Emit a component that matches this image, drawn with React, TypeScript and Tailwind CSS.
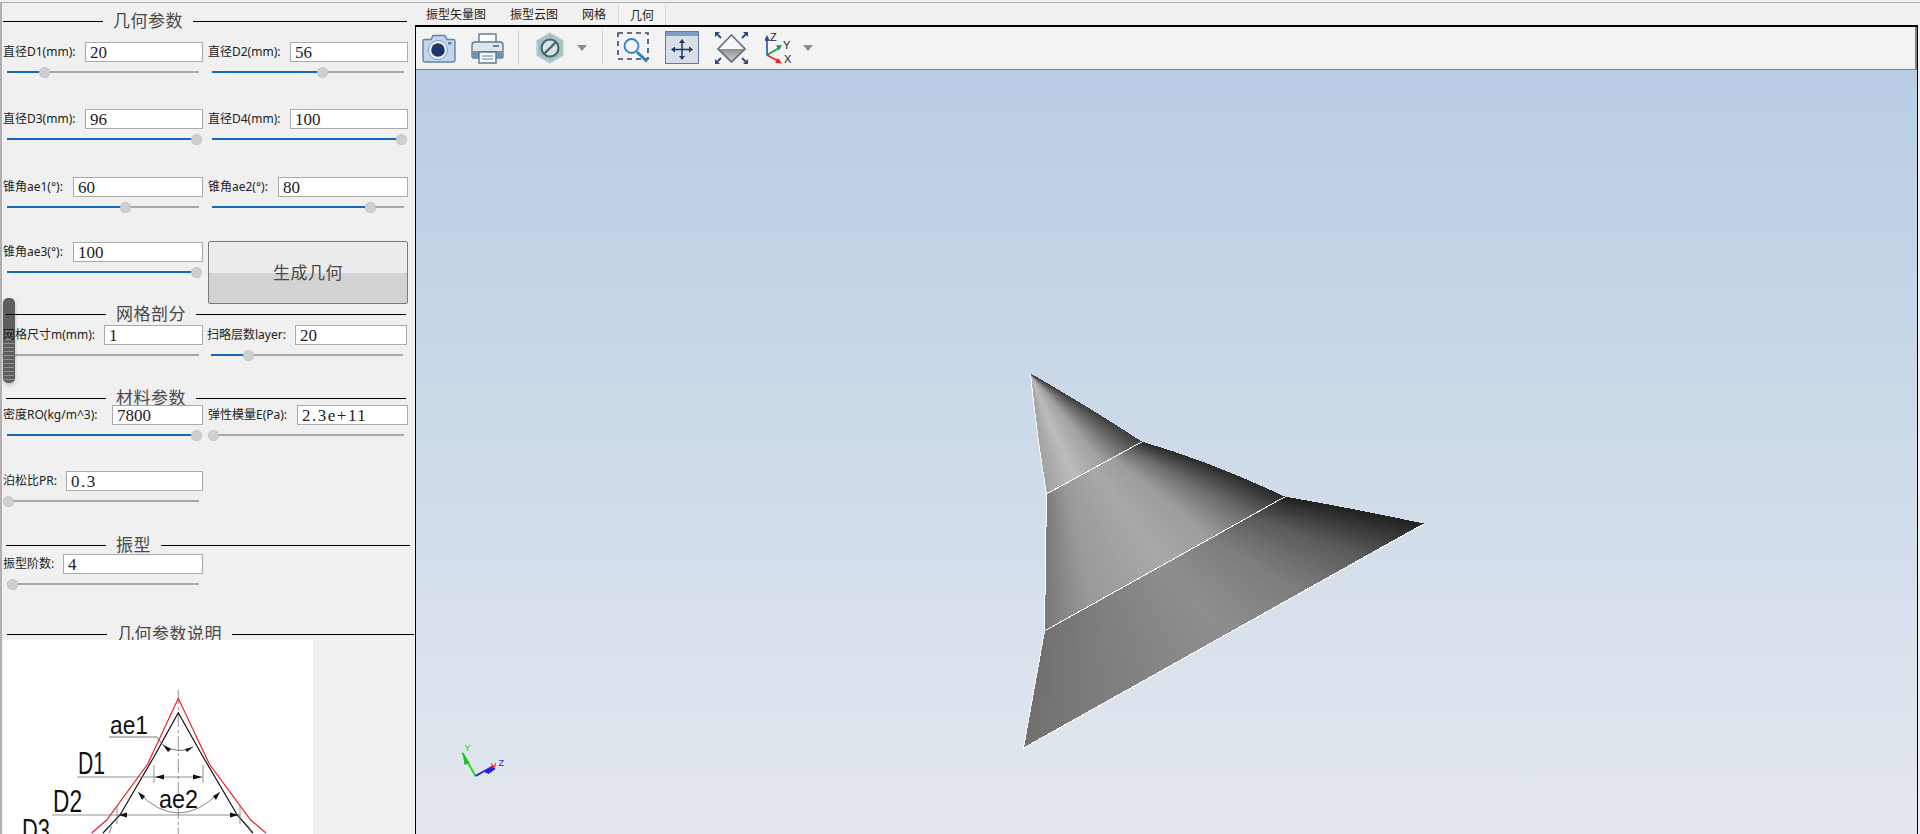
import type { ReactNode } from 'react'

type Pt = [number, number]
type Band = { a0: Pt; a1: Pt; b0: Pt; b1: Pt; c0: Pt; c1: Pt; stops: [number, number][] }

const A: Pt = [1030, 374]
const B: Pt = [1141, 442]
const C: Pt = [1284, 497]
const D: Pt = [1423, 524]
const E: Pt = [1023, 748]
const F: Pt = [1044, 631]
const G: Pt = [1046, 494]

// each band of the cone is drawn as thin slices, the shade only depends on t
const bands: Band[] = [
  {
    a0: A, a1: A, b0: G, b1: B, c0: [1036, 434], c1: [1086, 406],
    stops: [[0, 160], [0.3, 188], [0.6, 160], [0.8, 112], [1, 64]],
  },
  {
    a0: G, a1: B, b0: F, b1: C, c0: [1045, 562], c1: [1210, 462],
    stops: [[0, 120], [0.2, 154], [0.5, 168], [0.7, 156], [0.85, 108], [1, 44]],
  },
  {
    a0: F, a1: C, b0: E, b1: D, c0: [1034, 689], c1: [1353, 509],
    stops: [[0, 112], [0.25, 128], [0.5, 142], [0.7, 124], [0.85, 92], [1, 34]],
  },
]

const lerp = (p: Pt, q: Pt, t: number): string =>
  `${(p[0] + (q[0] - p[0]) * t).toFixed(2)} ${(p[1] + (q[1] - p[1]) * t).toFixed(2)}`

function shade(stops: [number, number][], t: number) {
  for (let i = 1; i < stops.length; i++) {
    if (t <= stops[i][0]) {
      const k = (t - stops[i - 1][0]) / (stops[i][0] - stops[i - 1][0])
      const g = Math.round(stops[i - 1][1] + (stops[i][1] - stops[i - 1][1]) * k)
      return `rgb(${g},${g},${g})`
    }
  }
  return 'rgb(34,34,34)'
}

const slices = bands.flatMap((band, n) =>
  Array.from({ length: 90 }, (_, i) => {
    const t0 = i / 90
    const t1 = (i + 1) / 90
    const { a0, a1, b0, b1, c0, c1 } = band
    return {
      key: `${n}-${i}`,
      fill: shade(band.stops, (t0 + t1) / 2),
      d: `M${lerp(a0, a1, t0)} Q${lerp(c0, c1, t0)} ${lerp(b0, b1, t0)} L${lerp(b0, b1, t1)} Q${lerp(c0, c1, t1)} ${lerp(a0, a1, t1)} Z`,
    }
  }),
)

function Slider({ offset }: { offset: number }) {
  return (
    <div className="relative ml-[4px] mt-[4px] flex h-[12px] w-[192px] items-center">
      <div className="h-[2px] w-full bg-[#a8a8a8]" />
      <div className="absolute left-0 top-[5px] h-[2px] bg-[#1569bd]" style={{ width: offset }} />
      <div
        className="absolute top-[1px] h-[11px] w-[11px] rounded-full border border-dotted border-[#bbbbbb] bg-[#cfcfcf]"
        style={{ left: offset - 5 }}
      />
    </div>
  )
}

function Field({
  label,
  labelClass,
  value,
  offset,
  valueClass = '',
  className = '',
}: {
  label: string
  labelClass: string
  value: string
  offset: number
  valueClass?: string
  className?: string
}) {
  return (
    <div className={className}>
      <div className="flex h-[20px] items-center">
        <span className={`${labelClass} relative z-20 shrink-0 whitespace-nowrap text-[12px] leading-[20px] text-[#222222]`}>{label}</span>
        <div className={`${valueClass} h-[20px] flex-1 border border-[#a9a9a9] bg-white pl-[4px] font-['Liberation_Serif','Noto_Sans_CJK_SC',serif] text-[17px] leading-[19px] text-[#222222]`}>
          {value}
        </div>
      </div>
      <Slider offset={offset} />
    </div>
  )
}

function SectionTitle({ title, className }: { title: string; className: string }) {
  return (
    <div className={`${className} relative z-20 flex h-[20px] items-center`}>
      <div className="h-px w-[100px] bg-black" />
      <span className="mx-[10px] whitespace-nowrap text-[17px] leading-[20px] tracking-[0.5px] text-[#4a4a4a]">{title}</span>
      <div className="h-px flex-1 bg-black" />
    </div>
  )
}

function Diagram() {
  return (
    <svg className="block h-[194px] w-[310px]" viewBox="3 640 310 194">
      <rect x="3" y="640" width="310" height="194" fill="#ffffff" />
      <path d="M178.3 690V834" stroke="#777777" strokeWidth="0.8" strokeDasharray="14 3 3 3" fill="none" />
      <path d="M91.7 833L106.7 820L147.7 764L178.3 698.3L209.3 764L250.7 820L266 833" stroke="#ee1c25" strokeWidth="1.2" fill="none" />
      <path d="M103 833L120 815L154 756.7L178.3 712.7L203 756.7L237.3 815L253 833" stroke="#111111" strokeWidth="1.2" fill="none" />
      <path d="M109 737H157L163 745Q178 755 193 747" stroke="#555555" strokeWidth="0.8" fill="none" />
      <path d="M77 777H203M154 765V783M203 765V783" stroke="#777777" strokeWidth="0.8" fill="none" />
      <path d="M52 815H240M117 806V824M240 806V824" stroke="#777777" strokeWidth="0.8" fill="none" />
      <path d="M138 792Q178 834 220 792" stroke="#666666" strokeWidth="0.8" fill="none" />
      <path d="M155 777L164 774.5V779.5ZM202 777L193 774.5V779.5ZM118 815L127 812.5V817.5ZM239 815L230 812.5V817.5ZM163 745L171 749L168 752ZM193 747L185 749L187 752ZM138 792L145 796L142 800ZM220 792L213 796L216 800Z" fill="#111111" />
      <path d="M109 833L112 826M248 826L252 833" stroke="#555555" strokeWidth="0.8" fill="none" />
      <g fontFamily="'Liberation Sans', sans-serif" fill="#111111">
        <text x="110" y="734" fontSize="26" textLength="38" lengthAdjust="spacingAndGlyphs">ae1</text>
        <text x="78" y="774" fontSize="31" textLength="27" lengthAdjust="spacingAndGlyphs">D1</text>
        <text x="159" y="808" fontSize="26" textLength="39" lengthAdjust="spacingAndGlyphs">ae2</text>
        <text x="53" y="812" fontSize="31" textLength="29" lengthAdjust="spacingAndGlyphs">D2</text>
        <text x="22" y="841" fontSize="31" textLength="28" lengthAdjust="spacingAndGlyphs">D3</text>
      </g>
    </svg>
  )
}

function LeftPanel() {
  return (
    <div className="relative flex w-[415px] shrink-0 flex-col overflow-hidden border-l-2 border-[#b0b0b0] pl-px pt-[8px]">
      <SectionTitle title="几何参数" className="mr-[8px]" />
      <div className="mr-[7px] mt-[11px] grid grid-cols-[200px_200px] gap-x-[5px]">
        <Field label="直径D1(mm):" labelClass="w-[82px]" value="20" offset={37} />
        <Field label="直径D2(mm):" labelClass="w-[82px]" value="56" offset={110} />
      </div>
      <div className="mr-[7px] mt-[31px] grid grid-cols-[200px_200px] gap-x-[5px]">
        <Field label="直径D3(mm):" labelClass="w-[82px]" value="96" offset={189} />
        <Field label="直径D4(mm):" labelClass="w-[82px]" value="100" offset={189} />
      </div>
      <div className="mr-[7px] mt-[32px] grid grid-cols-[200px_200px] gap-x-[5px]">
        <Field label="锥角ae1(°):" labelClass="w-[70px]" value="60" offset={118} />
        <Field label="锥角ae2(°):" labelClass="w-[70px]" value="80" offset={158} />
      </div>
      <div className="mr-[7px] mt-[28px] grid h-[63px] grid-cols-[200px_200px] gap-x-[5px]">
        <Field label="锥角ae3(°):" labelClass="w-[70px]" value="100" offset={189} className="mt-px" />
        <button className="rounded-[2px] border border-[#7a7a7a] bg-[linear-gradient(#ececec_0,#ececec_50%,#d3d3d3_50%,#d3d3d3_100%)] text-[17px] tracking-[0.5px] text-[#4a4a4a]">
          生成几何
        </button>
      </div>
      <SectionTitle title="网格剖分" className="ml-[3px] mr-[9px]" />
      <div className="mr-[7px] mt-px grid grid-cols-[200px_200px] gap-x-[5px]">
        <Field label="网格尺寸m(mm):" labelClass="w-[101px]" value="1" offset={0} />
        <Field label="扫略层数layer:" labelClass="w-[88px]" value="20" offset={37} className="-ml-px mr-px" />
      </div>
      <SectionTitle title="材料参数" className="ml-[3px] mr-[9px] mt-[27px]" />
      <div className="relative z-30 mr-[7px] mt-[-3px] grid grid-cols-[200px_200px] gap-x-[5px]">
        <Field label="密度RO(kg/m^3):" labelClass="w-[109px]" value="7800" offset={189} />
        <Field label="弹性模量E(Pa):" labelClass="w-[89px]" value="2.3e+11" valueClass="tracking-[1.5px]" offset={1} />
      </div>
      <div className="mr-[7px] mt-[30px] grid grid-cols-[200px_200px] gap-x-[5px]">
        <Field label="泊松比PR:" labelClass="w-[63px]" value="0.3" valueClass="tracking-[1.5px]" offset={1} />
      </div>
      <SectionTitle title="振型" className="ml-[3px] mr-[5px] mt-[28px]" />
      <div className="relative mr-[7px] mt-[-1px] grid grid-cols-[200px_200px] gap-x-[5px]">
        <Field label="振型阶数:" labelClass="w-[60px]" value="4" offset={5} />
      </div>
      <SectionTitle title="几何参数说明" className="ml-[4px] mr-px mt-[34px]" />
      <div className="relative z-30 mt-[-4px]">
        <Diagram />
      </div>
      {/* floating progress handle, lines and labels stay on top of it */}
      <div className="absolute left-px top-[295px] z-10 flex h-[85px] w-[12px] flex-col justify-end gap-[3px] rounded-[5px] bg-[#5f5f5f] px-[1px] pb-[3px] shadow-[0_2px_4px_rgba(0,0,0,0.2)]">
        {Array.from({ length: 13 }, (_, i) => (
          <div key={i} className="h-px w-full bg-[#2fd24a]" />
        ))}
      </div>
    </div>
  )
}

function Arrow({ className }: { className: string }) {
  return (
    <svg className={`${className} h-[6px] w-[10px] shrink-0`} viewBox="0 0 10 6">
      <path d="M0 0H10L5 6Z" fill="#8c8c8c" />
    </svg>
  )
}

function Separator({ className }: { className: string }) {
  return <div className={`${className} h-[35px] w-px shrink-0 bg-[#d2d2d2]`} />
}

function Icon({ className, w, h, children }: { className: string; w: number; h: number; children: ReactNode }) {
  return (
    <svg className={`${className} shrink-0`} width={w} height={h} viewBox={`0 0 ${w} ${h}`}>
      {children}
    </svg>
  )
}

function Toolbar() {
  return (
    <div className="flex h-[43px] items-center border-b border-r-2 border-[#808080] bg-[#f3f3f3] pb-px pl-[6px]">
      <Icon className="" w={34} h={30}>
        <path d="M2.5 6.5H9L11 2.5H23L25 6.5H31.5Q33 6.5 33 8V27Q33 29 31 29H3Q1 29 1 27V8Q1 6.5 2.5 6.5Z" fill="#c3d5ea" stroke="#5f83ad" strokeWidth="1.4" />
        <circle cx="16" cy="17" r="9.5" fill="#eef3f9" stroke="#7d9abc" />
        <circle cx="16" cy="17" r="6.8" fill="#1c3668" />
        <rect x="26" y="9" width="3.5" height="2.5" fill="#5f83ad" />
      </Icon>
      <Icon className="ml-[15px]" w={33} h={32}>
        <path d="M8 12V2H25V12" fill="#ffffff" stroke="#6b7f96" strokeWidth="1.5" />
        <path d="M4 10H29Q32 10 32 13V24Q32 26 30 26H3Q1 26 1 24V13Q1 10 4 10Z" fill="#dfe5ec" stroke="#5f7896" strokeWidth="1.4" />
        <rect x="2" y="19" width="29" height="6" fill="#7b8fa8" />
        <rect x="22" y="13" width="6" height="2" fill="#6b7f96" />
        <path d="M8 20H25V31H8Z" fill="#f7f9fb" stroke="#5f7896" strokeWidth="1.4" />
        <path d="M11 24H22M11 27H22" stroke="#6b7f96" strokeWidth="1.2" />
      </Icon>
      <Separator className="ml-[14px]" />
      <Icon className="ml-[17px]" w={28} h={32}>
        <path d="M14 1L27 8.5V23.5L14 31L1 23.5V8.5Z" fill="#a7c2c4" stroke="#b9cfd0" strokeWidth="1.2" />
        <circle cx="14" cy="16" r="8.5" fill="#d9e3e4" stroke="#43696f" strokeWidth="2.2" />
        <path d="M8 22L20 10" stroke="#43696f" strokeWidth="2.4" />
      </Icon>
      <Arrow className="ml-[13px]" />
      <Separator className="ml-[15px]" />
      <Icon className="ml-[14px]" w={33} h={31}>
        <rect x="1" y="1" width="30" height="26" fill="none" stroke="#33476e" strokeWidth="1.6" strokeDasharray="5 4" />
        <circle cx="14.5" cy="14" r="7" fill="#f2f6fa" stroke="#3580bd" strokeWidth="1.8" />
        <path d="M20 20L30 29.5" stroke="#3580bd" strokeWidth="3" />
      </Icon>
      <Icon className="ml-[15px]" w={34} h={33}>
        <rect x="0.5" y="0.5" width="33" height="32" fill="#d9dfe8" stroke="#5f7ca3" />
        <rect x="1" y="1" width="32" height="4" fill="#7f9cc2" />
        <path d="M17 11V26M9 18.5H25" stroke="#1f3a66" strokeWidth="1.5" />
        <path d="M17 8L20 12H14ZM17 29L14 25H20ZM6 18.5L10 15.5V21.5ZM28 18.5L24 15.5V21.5Z" fill="#1f3a66" />
      </Icon>
      <Icon className="ml-[16px]" w={33} h={32}>
        <defs>
          <linearGradient id="isoBottom" x1="0" y1="0" x2="0" y2="1">
            <stop offset="0" stopColor="#8f8f8f" />
            <stop offset="1" stopColor="#d6d6d6" />
          </linearGradient>
        </defs>
        <path d="M16.5 3L30 17H3Z" fill="#f7f7f7" />
        <path d="M3 17H30L16.5 30Z" fill="url(#isoBottom)" />
        <path d="M16.5 3L30 17L16.5 30L3 17Z" fill="none" stroke="#66758a" strokeWidth="1.8" />
        <path d="M6 6L2 2M27 6L31 2M6 26L2 30M27 26L31 30" stroke="#2e4a78" strokeWidth="1.8" />
        <path d="M0 0H5L0 5ZM33 0H28L33 5ZM0 32H5L0 27ZM33 32H28L33 27Z" fill="#2e4a78" />
      </Icon>
      <Icon className="ml-[17px]" w={28} h={33}>
        <path d="M2 24V8" stroke="#22509c" strokeWidth="1.6" />
        <path d="M2 4L5 10H-1Z" fill="#22509c" />
        <path d="M2 24L14 17" stroke="#1b9a4b" strokeWidth="1.6" />
        <path d="M17 14L11 14.5L14 19.5Z" fill="#1b9a4b" />
        <path d="M2 24L13 30" stroke="#e0262b" strokeWidth="1.6" />
        <path d="M17 32.5L10 32L13 27Z" fill="#e0262b" />
        <g fontFamily="'Liberation Sans', sans-serif" fontSize="11" fill="#222222">
          <text x="5" y="10">Z</text>
          <text x="18" y="18">Y</text>
          <text x="19" y="32">X</text>
        </g>
      </Icon>
      <Arrow className="ml-[10px]" />
    </div>
  )
}

function Viewport() {
  return (
    <div className="relative flex-1 overflow-hidden bg-[linear-gradient(#b8cde4,#e4e8ee)]">
      <svg className="absolute inset-0 h-full w-full" viewBox="417 70 1498 764">
        <g shapeRendering="crispEdges">
          {slices.map((s) => (
            <path key={s.key} d={s.d} fill={s.fill} stroke={s.fill} strokeWidth="1" />
          ))}
          <g stroke="#ffffff" strokeWidth="1" fill="none">
            <path d="M1030 374Q1036 434 1046 494" />
            <path d="M1046 494L1044 631L1023 748L1423 524" />
            <path d="M1046 494L1141 442" />
            <path d="M1044 631L1284 497" />
          </g>
        </g>
        {/* orientation triad */}
        <path d="M475 776L462 753" stroke="#22dd22" strokeWidth="2" />
        <path d="M462 752L469 763L464 765Z" fill="#22bb22" />
        <path d="M475 776L493 766" stroke="#2222dd" strokeWidth="2" />
        <path d="M484 772L492 765L495 769L488 774Z" fill="#2020e0" />
        <path d="M488 768L495 766M491 763L493 768M495 763L494 767" stroke="#ee2222" strokeWidth="1" />
        <g fontFamily="'Liberation Sans', sans-serif" fontSize="9">
          <text x="464" y="751" fill="#22cc22">Y</text>
          <text x="498" y="766" fill="#2020ee">Z</text>
        </g>
      </svg>
    </div>
  )
}

export default function App() {
  return (
    <div className="h-[834px] w-[1920px] overflow-hidden bg-[#f0f0f0] pt-[2px] font-['Noto_Sans','Noto_Sans_CJK_SC',sans-serif]">
      <div className="flex h-[832px] border-t border-[#b0b0b0]">
        <LeftPanel />
        <div className="flex min-w-0 flex-1 flex-col pr-[2px]">
          <div className="flex h-[22px] text-[12px] leading-[23px] text-[#222222]">
            <span className="pl-[11px] pr-[13px]">振型矢量图</span>
            <span className="pl-[11px] pr-[13px]">振型云图</span>
            <span className="pl-[11px] pr-[12px]">网格</span>
            <span className="mt-px border-x border-[#dcdcdc] bg-[#f3f3f3] px-[11px]">几何</span>
          </div>
          <div className="flex min-h-0 flex-1 flex-col border-x border-t-2 border-x-black border-t-black">
            <Toolbar />
            <Viewport />
          </div>
        </div>
      </div>
    </div>
  )
}
